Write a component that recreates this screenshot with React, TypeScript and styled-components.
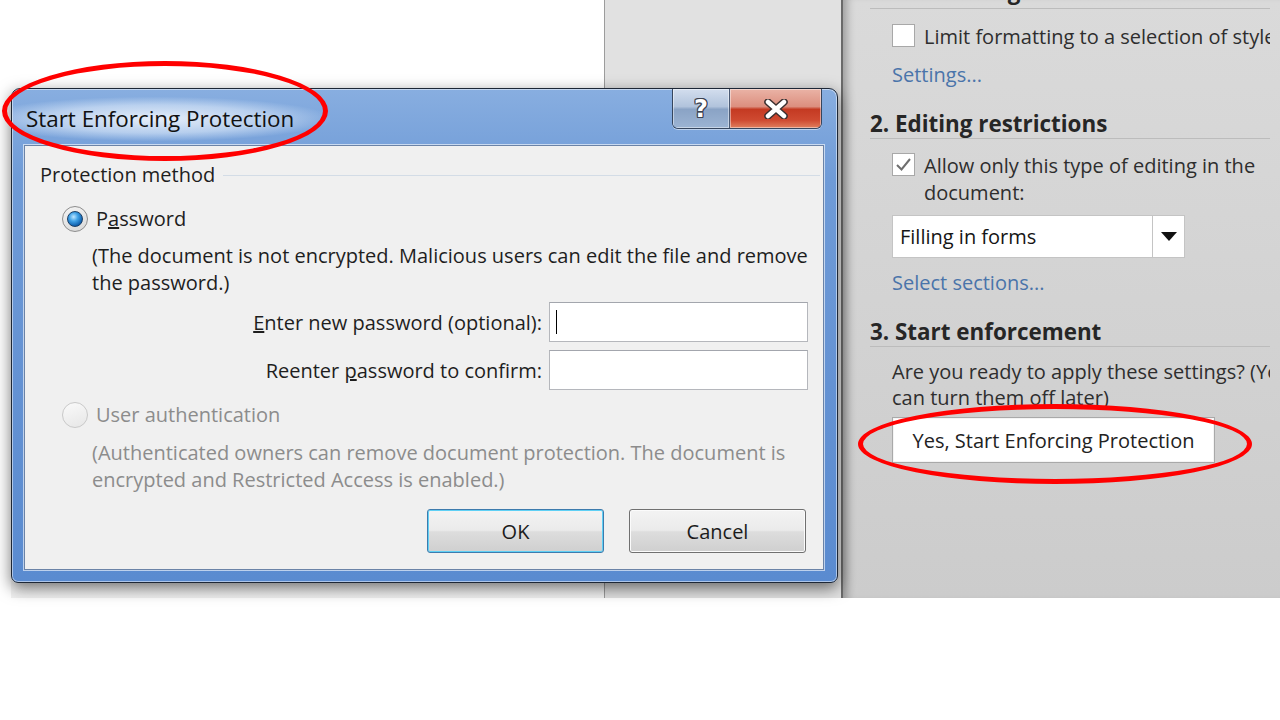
import styled, { createGlobalStyle } from "styled-components";

const GlobalStyle = createGlobalStyle`
  html, body {
    margin: 0;
    padding: 0;
    background: #fff;
  }
  body {
    font-family: "Open Sans", "Noto Sans", sans-serif;
  }
`;

const Slide = styled.div`
  position: relative;
  width: 1280px;
  height: 720px;
  background: #fff;
  overflow: hidden;
`;

const Shot = styled.div`
  display: flex;
  margin-left: 11px;
  width: 1269px;
  height: 598px;
`;

const DocArea = styled.div`
  width: 593px;
  background: linear-gradient(180deg, #fff 0%, #fff 92%, #f1f1f1 100%);
  border-right: 1px solid #9c9c9c;
`;

const Gutter = styled.div`
  width: 236px;
  background: #e1e1e1;
  border-right: 2px solid #6a6a6a;
`;

const TaskPane = styled.div`
  flex: 1;
  min-width: 0;
  padding: 0 10px 0 27px;
  background: linear-gradient(180deg, #dadada 0%, #cccccc 100%);
  box-shadow: inset 10px 0 8px -6px rgba(0, 0, 0, 0.28);
  color: #2e2e2e;
  font-size: 20px;
`;

const PaneBody = styled.div`
  height: 100%;
  overflow: hidden;
  display: flex;
  flex-direction: column;
`;

const Heading = styled.div<{ $top: number; $pad?: number }>`
  margin-top: ${(p) => p.$top}px;
  padding-bottom: ${(p) => p.$pad ?? 0}px;
  font-size: 22.4px;
  font-weight: 700;
  line-height: 28px;
  color: #262626;
  white-space: nowrap;
  border-bottom: 1px solid #bcbcbc;
`;

const Indent = styled.div<{ $top: number }>`
  margin-top: ${(p) => p.$top}px;
  padding-left: 22px;
`;

const CheckRow = styled.div`
  display: flex;
  align-items: flex-start;
  gap: 9px;
  line-height: 27px;
  white-space: nowrap;
`;

const CheckBox = styled.div`
  flex: none;
  width: 23px;
  height: 23px;
  margin-top: 1px;
  box-sizing: border-box;
  background: #fff;
  border: 1px solid #a8a8a8;
  display: flex;
  align-items: center;
  justify-content: center;
`;

const Link = styled.div<{ $top: number }>`
  margin-top: ${(p) => p.$top}px;
  color: #4a74aa;
  line-height: 26px;
`;

const Para = styled.div`
  line-height: 26px;
  white-space: nowrap;
`;

const Spaced = styled.div<{ $top: number }>`
  margin-top: ${(p) => p.$top}px;
`;

const Select = styled.div`
  display: flex;
  width: 293px;
  height: 43px;
  box-sizing: border-box;
  background: #fff;
  border: 1px solid #c4c4c4;
  color: #151515;
`;

const SelectValue = styled.div`
  flex: 1;
  display: flex;
  align-items: center;
  padding-left: 7px;
`;

const SelectArrow = styled.div`
  width: 31px;
  border-left: 1px solid #c4c4c4;
  display: flex;
  align-items: center;
  justify-content: center;
`;

const PaneButton = styled.div`
  width: 323px;
  height: 46px;
  box-sizing: border-box;
  background: #fff;
  border: 1px solid #a9a9a9;
  box-shadow: inset 0 0 0 1px #f4f4f4;
  display: flex;
  align-items: center;
  justify-content: center;
  color: #222;
`;

/* dialog window */

const Window = styled.div`
  position: absolute;
  left: 11px;
  top: 88px;
  width: 827px;
  height: 495px;
  box-sizing: border-box;
  display: flex;
  flex-direction: column;
  padding: 0 13px 12px 12px;
  border: 1px solid #1d2736;
  border-radius: 9px 9px 7px 7px;
  background: linear-gradient(180deg, #88aee0 0%, #6f9bd7 18%, #6492d3 60%, #5a8bd0 100%);
  box-shadow: 0 5px 16px rgba(0, 0, 0, 0.55), inset 0 0 0 1px rgba(255, 255, 255, 0.5);
`;

const TitleBar = styled.div`
  height: 56px;
  display: flex;
  align-items: flex-start;
`;

const TitleText = styled.div`
  margin: 8px 0 0 -12px;
  padding: 8px 36px 8px 14px;
  font-size: 22.4px;
  line-height: 28px;
  color: #111;
  background: radial-gradient(ellipse at 45% 50%, rgba(255, 255, 255, 0.8) 0%, rgba(230, 240, 252, 0.55) 45%, rgba(200, 220, 245, 0) 72%);
`;

const CaptionButtons = styled.div`
  margin-left: auto;
  margin-right: 2px;
  display: flex;
  height: 39px;
  border: 1px solid #36465e;
  border-top: none;
  border-radius: 0 0 6px 6px;
  overflow: hidden;
  box-shadow: 0 1px 0 rgba(255, 255, 255, 0.5);
`;

const CaptionButton = styled.div<{ $kind: "help" | "close" }>`
  width: ${(p) => (p.$kind === "help" ? 56 : 91)}px;
  display: flex;
  align-items: center;
  justify-content: center;
  box-shadow: inset 0 0 0 1px rgba(255, 255, 255, 0.45);
  background: ${(p) =>
    p.$kind === "help"
      ? "linear-gradient(180deg, #d3deee 0%, #b1c3dc 45%, #8aa3c5 52%, #9cb4d3 100%)"
      : "linear-gradient(180deg, #eab3a6 0%, #dc8f7f 45%, #c43a22 52%, #cf4a31 80%, #e0805f 100%)"};
  & + & {
    border-left: 1px solid #4a5a74;
  }
`;

const HelpGlyph = styled.span`
  font-family: "DejaVu Sans", sans-serif;
  font-weight: 700;
  font-size: 24px;
  line-height: 1;
  color: #fff;
  text-shadow: 1px 0 0 #3c4150, -1px 0 0 #3c4150, 0 1px 0 #3c4150, 0 -1px 0 #3c4150,
    1px 1px 0 #3c4150, -1px -1px 0 #3c4150, 1px -1px 0 #3c4150, -1px 1px 0 #3c4150;
`;

const Client = styled.div`
  flex: 1;
  display: flex;
  flex-direction: column;
  padding: 0 15px 16px 15px;
  background: #f0f0f0;
  border: 1px solid #6b83a7;
  box-shadow: 0 0 0 1px rgba(255, 255, 255, 0.6);
  color: #1e1e1e;
  font-size: 20px;
`;

const Legend = styled.div`
  margin: 16px -12px 0 0;
  display: flex;
  align-items: center;
  gap: 8px;
  line-height: 26px;
  &::after {
    content: "";
    flex: 1;
    height: 1px;
    background: #d3dce6;
  }
`;

const RadioRow = styled.div<{ $top: number; $disabled?: boolean }>`
  margin: ${(p) => p.$top}px 0 0 22px;
  display: flex;
  align-items: center;
  gap: 8px;
  line-height: 26px;
  color: ${(p) => (p.$disabled ? "#8c8c8c" : "inherit")};
`;

const Radio = styled.div<{ $checked?: boolean; $disabled?: boolean }>`
  width: 26px;
  height: 26px;
  box-sizing: border-box;
  border-radius: 50%;
  border: 1px solid ${(p) => (p.$disabled ? "#c9c9c9" : "#8d8d8d")};
  background: ${(p) =>
    p.$disabled
      ? "linear-gradient(160deg, #fafafa 0%, #e6e6e6 100%)"
      : "linear-gradient(160deg, #f4f4f4 0%, #d8d8d8 100%)"};
  display: flex;
  align-items: center;
  justify-content: center;
  &::after {
    content: "";
    display: ${(p) => (p.$checked ? "block" : "none")};
    width: 14px;
    height: 14px;
    border-radius: 50%;
    border: 1px solid #1b3f66;
    background: radial-gradient(circle at 40% 35%, #bfe6ff 0%, #3fa1e6 35%, #0b5aa8 75%, #083f7a 100%);
  }
`;

const Note = styled.div<{ $top: number; $disabled?: boolean }>`
  margin: ${(p) => p.$top}px 0 0 52px;
  line-height: 27px;
  white-space: nowrap;
  color: ${(p) => (p.$disabled ? "#8c8c8c" : "inherit")};
`;

const FieldRow = styled.div<{ $top: number }>`
  margin-top: ${(p) => p.$top}px;
  display: flex;
  align-items: center;
  justify-content: flex-end;
  gap: 7px;
`;

const TextBox = styled.div`
  width: 259px;
  height: 40px;
  box-sizing: border-box;
  background: #fff;
  border: 1px solid #b5b7bc;
  border-top-color: #a3a6ad;
  display: flex;
  align-items: center;
  padding-left: 6px;
`;

const Caret = styled.span`
  width: 1px;
  height: 24px;
  background: #000;
`;

const ButtonRow = styled.div`
  margin: 16px 2px 0 0;
  display: flex;
  justify-content: flex-end;
  gap: 25px;
`;

const DialogButton = styled.div<{ $default?: boolean }>`
  width: 177px;
  height: 44px;
  box-sizing: border-box;
  border-radius: 3px;
  border: 1px solid ${(p) => (p.$default ? "#3d7bad" : "#707070")};
  box-shadow: inset 0 0 0 1px ${(p) => (p.$default ? "#5fd0f5" : "#fbfbfb")};
  background: linear-gradient(180deg, #f3f3f3 0%, #ebebeb 48%, #dddddd 52%, #cfcfcf 100%);
  display: flex;
  align-items: center;
  justify-content: center;
  color: #1b1b1b;
`;

const Ring = styled.div<{ $x: number; $y: number; $w: number; $h: number }>`
  position: absolute;
  left: ${(p) => p.$x}px;
  top: ${(p) => p.$y}px;
  width: ${(p) => p.$w}px;
  height: ${(p) => p.$h}px;
  box-sizing: border-box;
  border: 5px solid #f00;
  border-radius: 50%;
  pointer-events: none;
`;

function CheckMark() {
  return (
    <svg width="17" height="15" viewBox="0 0 17 15">
      <path d="M2 8 L6.5 12.5 L15 2" fill="none" stroke="#6e6e6e" strokeWidth="2" />
    </svg>
  );
}

function CloseGlyph() {
  return (
    <svg width="26" height="20" viewBox="0 0 26 20">
      <path d="M5 3 L21 17 M21 3 L5 17" stroke="#3b3030" strokeWidth="7.5" strokeLinecap="round" />
      <path d="M5 3 L21 17 M21 3 L5 17" stroke="#fff" strokeWidth="4.5" strokeLinecap="round" />
    </svg>
  );
}

function DropArrow() {
  return (
    <svg width="16" height="9" viewBox="0 0 16 9">
      <path d="M0 0 H16 L8 9 Z" fill="#111" />
    </svg>
  );
}

function ProtectionDialog() {
  return (
    <Window>
      <TitleBar>
        <TitleText>Start Enforcing Protection</TitleText>
        <CaptionButtons>
          <CaptionButton $kind="help">
            <HelpGlyph>?</HelpGlyph>
          </CaptionButton>
          <CaptionButton $kind="close">
            <CloseGlyph />
          </CaptionButton>
        </CaptionButtons>
      </TitleBar>
      <Client>
        <Legend>Protection method</Legend>
        <RadioRow $top={18}>
          <Radio $checked />
          <span>
            P<u>a</u>ssword
          </span>
        </RadioRow>
        <Note $top={10}>
          (The document is not encrypted. Malicious users can edit the file and remove
          <br />
          the password.)
        </Note>
        <FieldRow $top={6}>
          <span>
            <u>E</u>nter new password (optional):
          </span>
          <TextBox>
            <Caret />
          </TextBox>
        </FieldRow>
        <FieldRow $top={8}>
          <span>
            Reenter <u>p</u>assword to confirm:
          </span>
          <TextBox />
        </FieldRow>
        <RadioRow $top={12} $disabled>
          <Radio $disabled />
          <span>User authentication</span>
        </RadioRow>
        <Note $top={11} $disabled>
          (Authenticated owners can remove document protection. The document is
          <br />
          encrypted and Restricted Access is enabled.)
        </Note>
        <ButtonRow>
          <DialogButton $default>OK</DialogButton>
          <DialogButton>Cancel</DialogButton>
        </ButtonRow>
      </Client>
    </Window>
  );
}

function RestrictPane() {
  return (
    <TaskPane>
      <PaneBody>
        <Heading $top={-23} $pad={3}>
          1. Formatting restrictions
        </Heading>
        <Indent $top={14}>
          <CheckRow>
            <CheckBox />
            <span>Limit formatting to a selection of styles</span>
          </CheckRow>
          <Link $top={12}>Settings...</Link>
        </Indent>
        <Heading $top={22}>2. Editing restrictions</Heading>
        <Indent $top={13}>
          <CheckRow>
            <CheckBox>
              <CheckMark />
            </CheckBox>
            <span>
              Allow only this type of editing in the
              <br />
              document:
            </span>
          </CheckRow>
          <Spaced $top={9}>
            <Select>
              <SelectValue>Filling in forms</SelectValue>
              <SelectArrow>
                <DropArrow />
              </SelectArrow>
            </Select>
          </Spaced>
          <Link $top={12}>Select sections...</Link>
        </Indent>
        <Heading $top={22}>3. Start enforcement</Heading>
        <Indent $top={12}>
          <Para>
            Are you ready to apply these settings? (You
            <br />
            can turn them off later)
          </Para>
          <Spaced $top={6}>
            <PaneButton>Yes, Start Enforcing Protection</PaneButton>
          </Spaced>
        </Indent>
      </PaneBody>
    </TaskPane>
  );
}

export default function App() {
  return (
    <Slide>
      <GlobalStyle />
      <Shot>
        <DocArea />
        <Gutter />
        <RestrictPane />
      </Shot>
      <ProtectionDialog />
      <Ring $x={2} $y={61} $w={326} $h={100} />
      <Ring $x={858} $y={404} $w={394} $h={80} />
    </Slide>
  );
}
